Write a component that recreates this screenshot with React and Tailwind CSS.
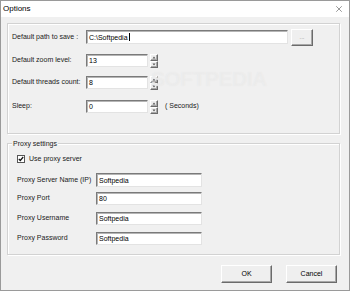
import { X } from "lucide-react";

const sunken =
  "bg-white border border-t-[#7a7a7a] border-l-[#7a7a7a] border-r-[#e3e3e3] border-b-[#e3e3e3] shadow-[inset_1px_1px_0_#b5b5b5]";
const raised =
  "bg-[#efefef] border border-t-white border-l-white border-r-[#6b6b6b] border-b-[#6b6b6b] shadow-[inset_-1px_-1px_0_#a8a8a8]";

const Field = ({ value, className = "", caret = false }) => (
  <div className={`${sunken} flex items-center pl-[2px] text-black leading-none ${className}`}>
    <span>{value}</span>
    {caret && <span className="ml-px h-[8px] w-px bg-black" />}
  </div>
);

const Spinner = () => (
  <div className="ml-[2px] flex h-[14px] w-[8px] flex-col">
    {["up", "down"].map((dir) => (
      <div key={dir} className={`${raised} flex flex-1 items-center justify-center`}>
        <svg width="4" height="3" viewBox="0 0 4 3">
          <path d={dir === "up" ? "M2 0.5L3.5 2.5H0.5Z" : "M2 2.5L3.5 0.5H0.5Z"} fill="#555" />
        </svg>
      </div>
    ))}
  </div>
);

const GroupRow = ({ label, children, className = "" }) => (
  <div className={`flex h-[13px] items-center ${className}`}>
    <span className="w-[74px] shrink-0 pl-[4px]">{label}</span>
    {children}
  </div>
);

const ProxyRow = ({ label, value, className = "" }) => (
  <div className={`flex h-[13px] items-center ${className}`}>
    <span className="w-[88px] shrink-0 pl-[9px]">{label}</span>
    <Field value={value} className="h-full w-[106px]" />
  </div>
);

export default function App() {
  return (
    <div className="relative h-[291px] w-[350px] overflow-hidden border border-[#9a9a9a] bg-[#f0f0f0] font-['Liberation_Sans',Arial,sans-serif] text-[7px] text-[#1a1a1a]">
      <div className="flex h-[16px] items-center justify-between bg-white pl-[2px] pr-[5px]">
        <span className="text-[8px] text-black">Options</span>
        <X size={10} strokeWidth={1.2} className="text-[#333]" />
      </div>

      <div className="pl-[6px] pt-[6px]">
        <div className="h-[111px] w-[333px] border border-[#d2d2d2] pt-[6px] shadow-[inset_1px_1px_0_#fff,1px_1px_0_#fff]">
          <div className="flex h-[14px] items-center">
            <span className="w-[78px] shrink-0 pl-[4px]">Default path to save :</span>
            <Field value="C:\Softpedia" caret className="h-full w-[202px]" />
            <button className={`${raised} ml-[3px] flex h-[17px] w-[22px] items-end justify-center pb-[5px] text-[6px] leading-none text-[#8a8a8a]`}>
              ...
            </button>
          </div>
          <GroupRow label="Default zoom level:" className="mt-[10px]">
            <span className="w-[4px]" />
            <Field value="13" className="h-full w-[62px]" />
            <Spinner />
          </GroupRow>
          <GroupRow label="Default threads count:" className="mt-[9px]">
            <span className="w-[4px]" />
            <Field value="8" className="h-full w-[62px]" />
            <Spinner />
          </GroupRow>
          <GroupRow label="Sleep:" className="mt-[11px]">
            <span className="w-[4px]" />
            <Field value="0" className="h-full w-[62px]" />
            <Spinner />
            <span className="ml-[7px]">( Seconds)</span>
          </GroupRow>
        </div>

        <div className="relative mt-[9px] h-[112px] w-[333px] border border-[#d2d2d2] pt-[10px] shadow-[inset_1px_1px_0_#fff,1px_1px_0_#fff]">
          <span className="absolute -top-[5px] left-[4px] bg-[#f0f0f0] px-px leading-[9px]">Proxy settings</span>
          <div className="flex h-[10px] items-center pl-[9px]">
            <div className="flex h-[8px] w-[8px] items-center justify-center border border-[#555] bg-white">
              <svg width="6" height="6" viewBox="0 0 6 6">
                <path d="M0.8 3L2.3 4.5L5.2 1" fill="none" stroke="#111" strokeWidth="1.2" />
              </svg>
            </div>
            <span className="ml-[4px]">Use proxy server</span>
          </div>
          <ProxyRow label="Proxy Server Name (IP)" value="Softpedia" className="mt-[9px] h-[14px]" />
          <ProxyRow label="Proxy Port" value="80" className="mt-[5px]" />
          <ProxyRow label="Proxy Username" value="Softpedia" className="mt-[7px]" />
          <ProxyRow label="Proxy Password" value="Softpedia" className="mt-[7px]" />
        </div>
      </div>

      <div className="mt-[10px] flex justify-end gap-[14px] pr-[12px]">
        <button className={`${raised} h-[18px] w-[51px] text-[7px] text-black`}>OK</button>
        <button className={`${raised} h-[18px] w-[51px] text-[7px] text-black`}>Cancel</button>
      </div>

      <span className="pointer-events-none absolute left-[150px] top-[62px] text-[21px] font-bold tracking-[-0.5px] text-white/30 [text-shadow:0_0_1px_#e4e4e4]">
        SOFTPEDIA
      </span>
    </div>
  );
}
